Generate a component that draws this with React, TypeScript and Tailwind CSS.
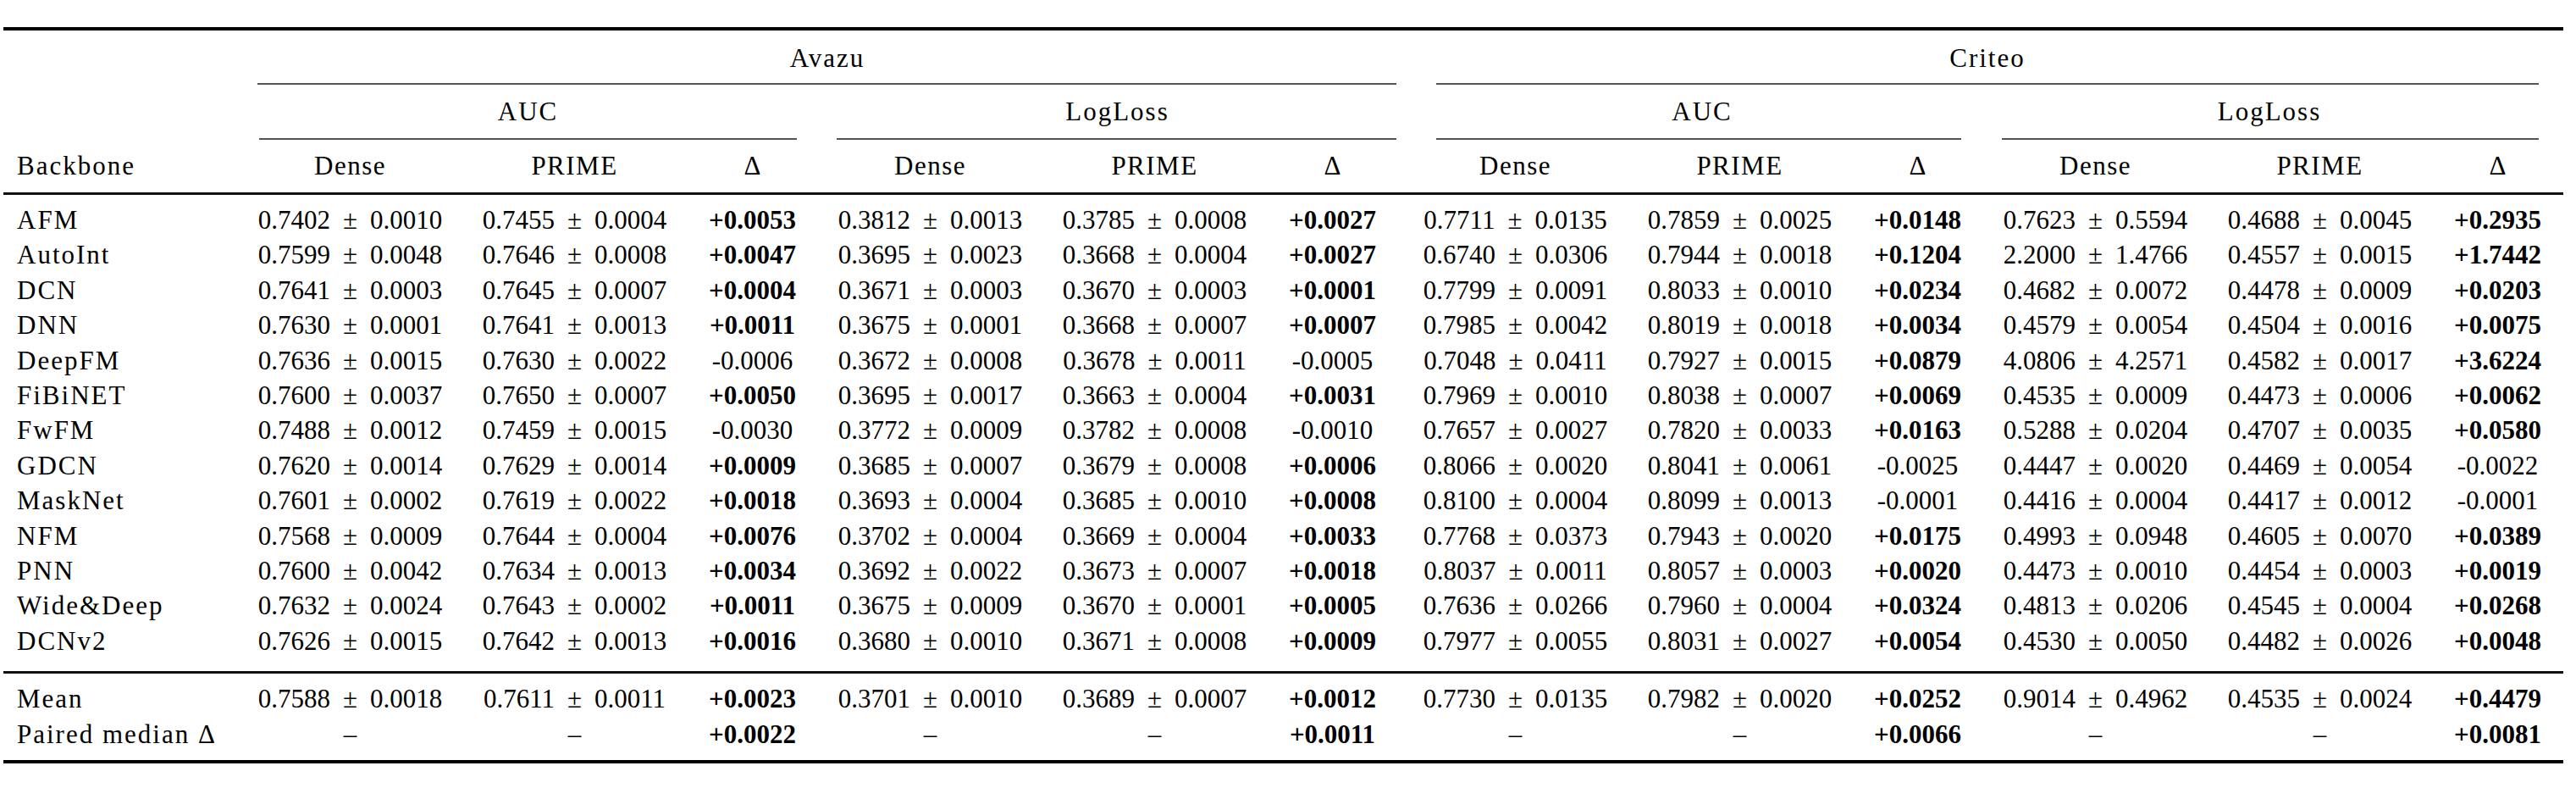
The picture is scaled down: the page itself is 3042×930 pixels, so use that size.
import React from "react";

type Row = { name: string; cells: string[] };

const rows: Row[] = [
  { name: "AFM", cells: ["0.7402 ± 0.0010", "0.7455 ± 0.0004", "+0.0053", "0.3812 ± 0.0013", "0.3785 ± 0.0008", "+0.0027", "0.7711 ± 0.0135", "0.7859 ± 0.0025", "+0.0148", "0.7623 ± 0.5594", "0.4688 ± 0.0045", "+0.2935"] },
  { name: "AutoInt", cells: ["0.7599 ± 0.0048", "0.7646 ± 0.0008", "+0.0047", "0.3695 ± 0.0023", "0.3668 ± 0.0004", "+0.0027", "0.6740 ± 0.0306", "0.7944 ± 0.0018", "+0.1204", "2.2000 ± 1.4766", "0.4557 ± 0.0015", "+1.7442"] },
  { name: "DCN", cells: ["0.7641 ± 0.0003", "0.7645 ± 0.0007", "+0.0004", "0.3671 ± 0.0003", "0.3670 ± 0.0003", "+0.0001", "0.7799 ± 0.0091", "0.8033 ± 0.0010", "+0.0234", "0.4682 ± 0.0072", "0.4478 ± 0.0009", "+0.0203"] },
  { name: "DNN", cells: ["0.7630 ± 0.0001", "0.7641 ± 0.0013", "+0.0011", "0.3675 ± 0.0001", "0.3668 ± 0.0007", "+0.0007", "0.7985 ± 0.0042", "0.8019 ± 0.0018", "+0.0034", "0.4579 ± 0.0054", "0.4504 ± 0.0016", "+0.0075"] },
  { name: "DeepFM", cells: ["0.7636 ± 0.0015", "0.7630 ± 0.0022", "-0.0006", "0.3672 ± 0.0008", "0.3678 ± 0.0011", "-0.0005", "0.7048 ± 0.0411", "0.7927 ± 0.0015", "+0.0879", "4.0806 ± 4.2571", "0.4582 ± 0.0017", "+3.6224"] },
  { name: "FiBiNET", cells: ["0.7600 ± 0.0037", "0.7650 ± 0.0007", "+0.0050", "0.3695 ± 0.0017", "0.3663 ± 0.0004", "+0.0031", "0.7969 ± 0.0010", "0.8038 ± 0.0007", "+0.0069", "0.4535 ± 0.0009", "0.4473 ± 0.0006", "+0.0062"] },
  { name: "FwFM", cells: ["0.7488 ± 0.0012", "0.7459 ± 0.0015", "-0.0030", "0.3772 ± 0.0009", "0.3782 ± 0.0008", "-0.0010", "0.7657 ± 0.0027", "0.7820 ± 0.0033", "+0.0163", "0.5288 ± 0.0204", "0.4707 ± 0.0035", "+0.0580"] },
  { name: "GDCN", cells: ["0.7620 ± 0.0014", "0.7629 ± 0.0014", "+0.0009", "0.3685 ± 0.0007", "0.3679 ± 0.0008", "+0.0006", "0.8066 ± 0.0020", "0.8041 ± 0.0061", "-0.0025", "0.4447 ± 0.0020", "0.4469 ± 0.0054", "-0.0022"] },
  { name: "MaskNet", cells: ["0.7601 ± 0.0002", "0.7619 ± 0.0022", "+0.0018", "0.3693 ± 0.0004", "0.3685 ± 0.0010", "+0.0008", "0.8100 ± 0.0004", "0.8099 ± 0.0013", "-0.0001", "0.4416 ± 0.0004", "0.4417 ± 0.0012", "-0.0001"] },
  { name: "NFM", cells: ["0.7568 ± 0.0009", "0.7644 ± 0.0004", "+0.0076", "0.3702 ± 0.0004", "0.3669 ± 0.0004", "+0.0033", "0.7768 ± 0.0373", "0.7943 ± 0.0020", "+0.0175", "0.4993 ± 0.0948", "0.4605 ± 0.0070", "+0.0389"] },
  { name: "PNN", cells: ["0.7600 ± 0.0042", "0.7634 ± 0.0013", "+0.0034", "0.3692 ± 0.0022", "0.3673 ± 0.0007", "+0.0018", "0.8037 ± 0.0011", "0.8057 ± 0.0003", "+0.0020", "0.4473 ± 0.0010", "0.4454 ± 0.0003", "+0.0019"] },
  { name: "Wide&Deep", cells: ["0.7632 ± 0.0024", "0.7643 ± 0.0002", "+0.0011", "0.3675 ± 0.0009", "0.3670 ± 0.0001", "+0.0005", "0.7636 ± 0.0266", "0.7960 ± 0.0004", "+0.0324", "0.4813 ± 0.0206", "0.4545 ± 0.0004", "+0.0268"] },
  { name: "DCNv2", cells: ["0.7626 ± 0.0015", "0.7642 ± 0.0013", "+0.0016", "0.3680 ± 0.0010", "0.3671 ± 0.0008", "+0.0009", "0.7977 ± 0.0055", "0.8031 ± 0.0027", "+0.0054", "0.4530 ± 0.0050", "0.4482 ± 0.0026", "+0.0048"] },
];

const summary: Row[] = [
  { name: "Mean", cells: ["0.7588 ± 0.0018", "0.7611 ± 0.0011", "+0.0023", "0.3701 ± 0.0010", "0.3689 ± 0.0007", "+0.0012", "0.7730 ± 0.0135", "0.7982 ± 0.0020", "+0.0252", "0.9014 ± 0.4962", "0.4535 ± 0.0024", "+0.4479"] },
  { name: "Paired median Δ", cells: ["–", "–", "+0.0022", "–", "–", "+0.0011", "–", "–", "+0.0066", "–", "–", "+0.0081"] },
];

// 277 | Avazu: 265 265 155 265 265 155 | spacer 6 | Criteo: 265 265 155 265 265 155
const GRID =
  "grid grid-cols-[277px_265px_265px_155px_265px_265px_155px_6px_265px_265px_155px_265px_265px_155px]";

const LABEL = "tracking-[2px]";

function Cell({ v }: { v: string }) {
  if (v.includes(" ± ")) {
    const [a, b] = v.split(" ± ");
    return (
      <div className="text-center whitespace-nowrap">
        {a}
        <span className="mx-[15px]">±</span>
        {b}
      </div>
    );
  }
  const bold = v.startsWith("+");
  return <div className={"text-center whitespace-nowrap " + (bold ? "font-bold" : "")}>{v}</div>;
}

function DataRow({ r }: { r: Row }) {
  const cells = r.cells;
  return (
    <div className={GRID + " leading-[41.4px]"}>
      <div className={"pl-[16px] whitespace-nowrap " + LABEL}>{r.name}</div>
      {cells.slice(0, 6).map((c, i) => (
        <Cell key={i} v={c} />
      ))}
      <div />
      {cells.slice(6).map((c, i) => (
        <Cell key={i + 6} v={c} />
      ))}
    </div>
  );
}

function ColHeads() {
  return (
    <>
      <div className="text-center tracking-[1.5px]">Dense</div>
      <div className="text-center tracking-[1.5px]">PRIME</div>
      <div className="text-center">Δ</div>
    </>
  );
}

export default function App() {
  return (
    <div className="w-[3042px] h-[930px] bg-white text-black font-['Liberation_Serif','Times_New_Roman',serif] text-[31px] leading-[31px] overflow-hidden">
      <div className="ml-[4px] w-[3023px] pt-[32px]">
        <div className="h-[4px] bg-black" />
        {/* dataset row */}
        <div className="grid grid-cols-[277px_1392px_1354px] h-[62px] pt-[17px]">
          <div />
          <div className={"text-center " + LABEL}>Avazu</div>
          <div className={"text-center pr-[6px] " + LABEL}>Criteo</div>
        </div>
        <div className="grid grid-cols-[277px_1392px_1354px] h-[2px]">
          <div />
          <div className="ml-[23px] mr-[24px] bg-[#555]" />
          <div className="ml-[23px] mr-[29px] bg-[#555]" />
        </div>
        {/* metric row */}
        <div className="grid grid-cols-[277px_685px_707px_670px_684px] h-[63px] pt-[16px]">
          <div />
          <div className={"text-center " + LABEL}>AUC</div>
          <div className={"text-center " + LABEL}>LogLoss</div>
          <div className={"text-center pl-[4px] " + LABEL}>AUC</div>
          <div className={"text-center pr-[10px] " + LABEL}>LogLoss</div>
        </div>
        <div className="grid grid-cols-[277px_685px_707px_670px_684px] h-[2px]">
          <div />
          <div className="mx-[25px] bg-[#555]" />
          <div className="ml-[22px] mr-[24px] bg-[#555]" />
          <div className="ml-[23px] mr-[27px] bg-[#555]" />
          <div className="ml-[21px] mr-[29px] bg-[#555]" />
        </div>
        {/* column row */}
        <div className={GRID + " h-[62px] pt-[15px]"}>
          <div className={"pl-[16px] " + LABEL}>Backbone</div>
          <ColHeads />
          <ColHeads />
          <div />
          <ColHeads />
          <ColHeads />
        </div>
        <div className="h-[3px] bg-[#111]" />
        <div className="pt-[9px] pb-[15px]">
          {rows.map((r) => (
            <DataRow key={r.name} r={r} />
          ))}
        </div>
        <div className="h-[3px] bg-[#111]" />
        <div className="pt-[9px] pb-[10px]">
          {summary.map((r) => (
            <DataRow key={r.name} r={r} />
          ))}
        </div>
        <div className="h-[4px] bg-black" />
      </div>
    </div>
  );
}
